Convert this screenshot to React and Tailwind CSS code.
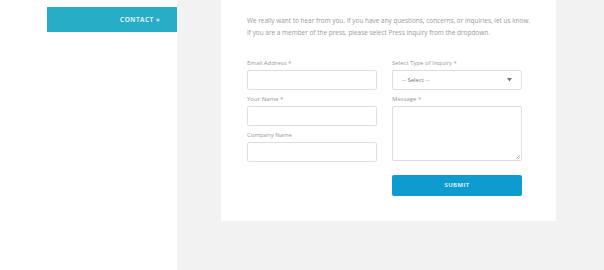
import React from 'react';

const font = { fontFamily: '"Open Sans", "Liberation Sans", sans-serif' };

const Label = ({ children }) => (
  <label className="block text-[6px] leading-[8px] text-[#999] mb-[3px]">{children}</label>
);

const Input = () => (
  <input className="block w-[130px] h-[20px] border border-[#dedede] rounded-[2px] bg-white outline-none" />
);

export default function App() {
  return (
    <div className="flex min-h-[270px] w-[604px] bg-[#f2f2f2]" style={font}>
      {/* sidebar */}
      <aside className="w-[177px] bg-white pt-[7px] pl-[47px]">
        <div className="h-[25px] bg-[#27adc5] flex items-center justify-end pr-[17px]">
          <span className="text-white text-[6.5px] font-semibold tracking-[0.5px]">CONTACT «</span>
        </div>
      </aside>

      {/* main */}
      <main className="flex-1 pl-[44px]">
        <div className="w-[335px] h-[221px] bg-white pl-[26px] pt-[15px]">
          <p className="text-[6.45px] leading-[12px] text-[#9a9a9a] w-[305px]">
            We really want to hear from you. If you have any questions, concerns, or inquiries, let us know.
            <br />
            If you are a member of the press, please select Press Inquiry from the dropdown.
          </p>

          <div className="mt-[20px] flex gap-[15px]">
            <div className="w-[130px]">
              <Label>Email Address *</Label>
              <Input />
              <div className="mt-[5px]">
                <Label>Your Name *</Label>
                <Input />
              </div>
              <div className="mt-[5px]">
                <Label>Company Name</Label>
                <Input />
              </div>
            </div>

            <div className="w-[130px]">
              <Label>Select Type of Inquiry *</Label>
              <div className="w-[130px] h-[20px] border border-[#dedede] rounded-[2px] flex items-center justify-between pl-[9px] pr-[9px]">
                <span className="text-[6px] text-[#777]">-- Select --</span>
                <svg width="5" height="4" viewBox="0 0 5 4">
                  <path d="M0 0 L5 0 L2.5 3.5 Z" fill="#777" />
                </svg>
              </div>
              <div className="mt-[5px]">
                <Label>Message *</Label>
                <div className="relative w-[130px] h-[55px] border border-[#dedede] rounded-[2px]">
                  <svg className="absolute right-[1px] bottom-[1px]" width="5" height="5" viewBox="0 0 5 5">
                    <path d="M5 1 L1 5 M5 3 L3 5" stroke="#aaa" strokeWidth="0.7" />
                  </svg>
                </div>
              </div>
              <button className="mt-[14px] w-[130px] h-[21px] bg-[#0e9bcf] rounded-[2px] text-white text-[6px] font-semibold tracking-[0.4px]">
                SUBMIT
              </button>
            </div>
          </div>
        </div>
      </main>
    </div>
  );
}
